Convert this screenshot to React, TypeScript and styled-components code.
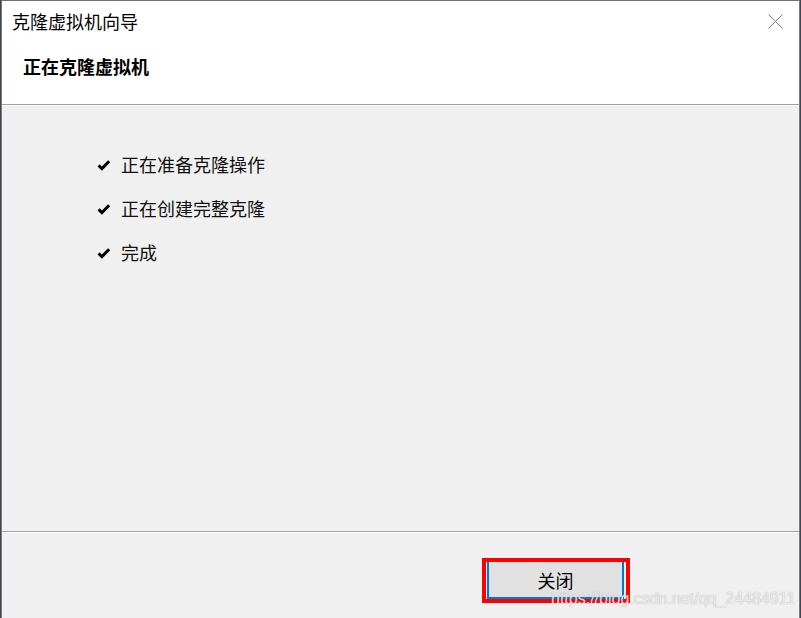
import React from "react";
import styled, { createGlobalStyle } from "styled-components";

const GlobalStyle = createGlobalStyle`
  html, body {
    margin: 0;
    padding: 0;
    background: #3c4655;
    overflow: hidden;
  }
  * { box-sizing: border-box; }
`;

const Window = styled.div`
  margin-left: 1px;
  width: 799px;
  height: 618px;
  display: flex;
  flex-direction: column;
  border-top: 1px solid #707070;
  border-left: 1px solid #7a7a7a;
  border-right: 1px solid #7a7a7a;
  background: #f0f0f0;
  font-family: "Noto Sans CJK SC", "Noto Sans", sans-serif;
  color: #000;
`;

const Header = styled.div`
  height: 104px;
  background: #ffffff;
  border-bottom: 1px solid #a0a0a0;
  display: flex;
  flex-direction: column;
  padding-top: 8px;
`;

const TitleBar = styled.div`
  display: flex;
  align-items: center;
  justify-content: space-between;
  padding-left: 10px;
  padding-right: 16px;
`;

const Title = styled.div`
  font-size: 18px;
  line-height: 24px;
  font-weight: 400;
`;

const CloseButton = styled.div`
  width: 15px;
  height: 15px;
  display: flex;
`;

const Subtitle = styled.div`
  margin-top: 21px;
  padding-left: 21px;
  font-size: 18px;
  line-height: 24px;
  font-weight: 700;
`;

const Body = styled.div`
  height: 427px;
  border-top: 1px solid #ffffff;
  border-bottom: 1px solid #a0a0a0;
  padding-top: 46px;
  padding-left: 95px;
  display: flex;
  flex-direction: column;
  gap: 20px;
`;

const StepRow = styled.div`
  display: flex;
  align-items: center;
  gap: 10px;
`;

const CheckBox = styled.span`
  display: flex;
  width: 14px;
  height: 12px;
  margin-top: 1px;
`;

const StepText = styled.span`
  font-size: 18px;
  line-height: 24px;
  font-weight: 400;
  color: #111;
`;

const Footer = styled.div`
  flex: 1;
  border-top: 1px solid #ffffff;
  display: flex;
  justify-content: flex-end;
  align-items: flex-start;
  padding-top: 27px;
  padding-right: 175px;
  position: relative;
`;

const ButtonWrap = styled.div`
  position: relative;
`;

const Button = styled.button`
  width: 137px;
  height: 39px;
  background: #e1e1e1;
  border: 2px solid #0078d7;
  font-family: "Noto Sans CJK SC", "Noto Sans", sans-serif;
  font-size: 18px;
  line-height: 24px;
  color: #000;
  padding: 0;
  margin: 0;
`;

const Annotation = styled.div`
  position: absolute;
  left: -5px;
  top: -2px;
  width: 148px;
  height: 45px;
  border: 4px solid #ff0000;
  pointer-events: none;
`;

const Watermark = styled.div`
  position: absolute;
  left: 549px;
  top: 56px;
  font-family: "Liberation Sans", Arial, sans-serif;
  font-size: 16px;
  line-height: 20px;
  color: rgba(255, 255, 255, 0.8);
  text-shadow: 0 0 1px rgba(90, 90, 90, 0.6);
  white-space: nowrap;
`;

const Check = () => (
  <svg width="14" height="12" viewBox="0 0 14 12">
    <path
      d="M1.6 6.4 L4.9 9.6 L12.2 2.2"
      stroke="#000"
      strokeWidth="3"
      strokeLinecap="butt"
      strokeLinejoin="miter"
      fill="none"
    />
  </svg>
);

const CloseIcon = () => (
  <svg width="15" height="15" viewBox="0 0 15 15">
    <path d="M0.5 0.5 L14.5 14.5 M14.5 0.5 L0.5 14.5" stroke="#808080" strokeWidth="1" fill="none" />
  </svg>
);

const steps = ["正在准备克隆操作", "正在创建完整克隆", "完成"];

export default function App() {
  return (
    <>
      <GlobalStyle />
      <Window>
        <Header>
          <TitleBar>
            <Title>克隆虚拟机向导</Title>
            <CloseButton>
              <CloseIcon />
            </CloseButton>
          </TitleBar>
          <Subtitle>正在克隆虚拟机</Subtitle>
        </Header>
        <Body>
          {steps.map((s) => (
            <StepRow key={s}>
              <CheckBox>
                <Check />
              </CheckBox>
              <StepText>{s}</StepText>
            </StepRow>
          ))}
        </Body>
        <Footer>
          <ButtonWrap>
            <Button>关闭</Button>
            <Annotation />
          </ButtonWrap>
          <Watermark>https://blog.csdn.net/qq_24484911</Watermark>
        </Footer>
      </Window>
    </>
  );
}
